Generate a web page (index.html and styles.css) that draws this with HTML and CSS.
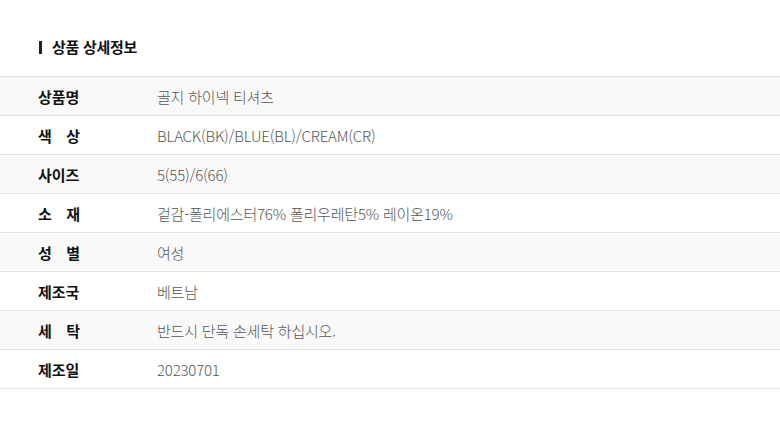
FILE: index.html
```html
<!DOCTYPE html>
<html lang="ko">
<head>
<meta charset="utf-8">
<link rel="stylesheet" href="styles.css">
</head>
<body>
<section class="detail">
  <h2 class="title">상품 상세정보</h2>
  <table class="info">
    <tr class="odd"><th><span class="lbl">상품명</span></th><td>골지 하이넥 티셔츠</td></tr>
    <tr><th><span class="lbl">색 상</span></th><td>BLACK(BK)/BLUE(BL)/CREAM(CR)</td></tr>
    <tr class="odd"><th><span class="lbl">사이즈</span></th><td>5(55)/6(66)</td></tr>
    <tr><th><span class="lbl">소 재</span></th><td>겉감-폴리에스터76% 폴리우레탄5% 레이온19%</td></tr>
    <tr class="odd"><th><span class="lbl">성 별</span></th><td>여성</td></tr>
    <tr><th><span class="lbl">제조국</span></th><td>베트남</td></tr>
    <tr class="odd"><th><span class="lbl">세 탁</span></th><td>반드시 단독 손세탁 하십시오.</td></tr>
    <tr><th><span class="lbl">제조일</span></th><td>20230701</td></tr>
  </table>
</section>
</body>
</html>
```
FILE: styles.css
```css
html, body {
  margin: 0;
  padding: 0;
  background: #fff;
}
body {
  font-family: "Noto Sans CJK KR", "Noto Sans", sans-serif;
  color: #222;
}
.detail {
  padding-top: 40px;
}
.title {
  display: flex;
  align-items: center;
  margin: 0 0 22px 39px;
  height: 14px;
  font-size: 15px;
  font-weight: 700;
  line-height: 14px;
  letter-spacing: -0.3px;
  color: #111;
}
.title::before {
  content: "";
  width: 3px;
  height: 13px;
  margin-right: 10px;
  background: #222;
}
.info {
  width: 100%;
  border-collapse: collapse;
  border-top: 1px solid #e2e2e2;
}
.info tr {
  height: 39px;
  border-bottom: 1px solid #e2e2e2;
}
.info tr.odd {
  background: #f9f9f9;
}
.info th {
  width: 119px;
  padding: 0 0 0 38px;
  text-align: left;
  font-size: 15px;
  font-weight: 700;
  color: #111;
}
.lbl {
  display: inline-block;
  width: 42px;
  text-align: justify;
  text-align-last: justify;
}
.info td {
  padding: 0;
  font-size: 15px;
  font-weight: 300;
  color: #555;
  letter-spacing: -0.2px;
}
```
